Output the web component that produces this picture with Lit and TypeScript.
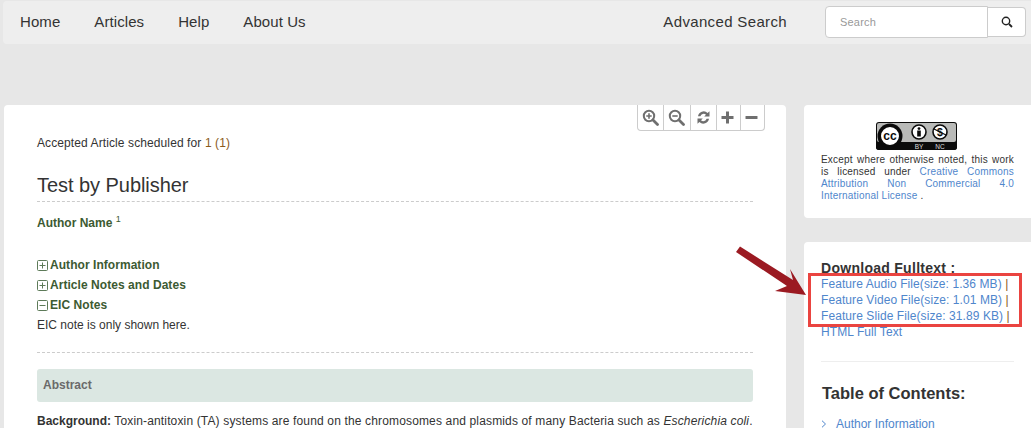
import { LitElement, html, css, svg } from "lit";
import { customElement } from "lit/decorators.js";

const zoomIcon = (plus: boolean) => svg`<svg width="17" height="17" viewBox="0 0 17 17" fill="none" stroke="#6f6f6f"><circle cx="7" cy="7" r="5.2" stroke-width="2"/><path d="M11 11l4.5 4.5" stroke-width="2.8" stroke-linecap="round"/><path d="M4.3 7h5.4${plus ? "M7 4.3v5.4" : ""}" stroke-width="1.6"/></svg>`;

@customElement("app-root")
export class AppRoot extends LitElement {
  static styles = css`
    :host { display: block; height: 428px; overflow: hidden; position: relative; background: #e7e7e7; font-family: "Liberation Sans", Arial, sans-serif; color: #333; }
    a { color: #4f86cc; text-decoration: none; }
    .nav { margin: 1px 0 0 3px; height: 43px; box-sizing: border-box; background: #eee; border-radius: 4px 0 0 4px; display: flex; align-items: center; padding: 0 5px 2px 17px; font-size: 15px; letter-spacing: 0.08px; color: #333; }
    .nav span { margin-right: 34px; }
    .nav .adv { margin: 0 38px 0 auto; font-size: 15px; letter-spacing: 0.35px; }
    .search { width: 163px; height: 32px; box-sizing: border-box; background: #fff; border: 1px solid #ccc; border-radius: 4px 0 0 4px; font-size: 11px; letter-spacing: 0.2px; color: #999; display: flex; align-items: center; padding-left: 14px; }
    .sbtn { width: 38px; height: 30px; box-sizing: border-box; background: #fff; border: 1px solid #ccc; border-left: 0; border-radius: 0 4px 4px 0; display: flex; align-items: center; justify-content: center; }
    .row { display: flex; align-items: flex-start; gap: 18px; margin: 61px 0 0 4px; }
    .main { position: relative; width: 782px; height: 340px; box-sizing: border-box; padding: 0 33px; background: #fff; border-radius: 4px 4px 0 0; font-size: 12px; }
    .tools { position: absolute; left: 633px; top: 0; display: flex; height: 26px; box-sizing: border-box; border: 1px solid #ccc; border-top: 0; border-radius: 0 0 4px 4px; }
    .tools div { box-sizing: border-box; display: flex; align-items: center; justify-content: center; border-right: 1px solid #ccc; height: 100%; }
    .tools div:last-child { border-right: 0; }
    .t26 { width: 26px; }
    .t27 { width: 27px; padding-right: 2px; }
    .t24 { width: 24px; padding-right: 3px; }
    .t23 { width: 23px; padding-right: 2px; }
    .sched { padding-top: 31px; line-height: 14px; letter-spacing: 0.1px; }
    .sched b { font-weight: 400; color: #8a5a1b; }
    h1 { margin: 0; padding: 21px 0 2px; height: 28px; line-height: 28px; font-size: 20px; font-weight: 400; letter-spacing: -0.05px; border-bottom: 1px dashed #ccc; box-sizing: content-box; }
    .author { margin-top: 13px; line-height: 16px; font-weight: 700; color: #3c5a32; }
    .author sup { font-size: 9px; font-weight: 400; line-height: 0; color: #3c5a32; }
    .secs { margin-top: 24px; padding-bottom: 17px; border-bottom: 1px dashed #ccc; }
    .sec { height: 20px; display: flex; align-items: center; gap: 2px; font-weight: 700; color: #3c5a32; letter-spacing: 0.05px; }
    .note { height: 20px; line-height: 20px; }
    .abs { margin-top: 16px; height: 33px; line-height: 33px; padding-left: 6px; background: #dbe7e2; border-radius: 3px; font-weight: 700; color: #6a6a6a; }
    .bg { margin-top: 11px; line-height: 17px; letter-spacing: 0.15px; white-space: nowrap; }
    .bg b { letter-spacing: 0; }
    .side { width: 227px; display: flex; flex-direction: column; gap: 24px; }
    .card { background: #fff; border-radius: 4px 0 0 4px; padding: 0 17px; box-sizing: border-box; }
    .cc { height: 113px; padding-top: 17px; }
    .badge { display: block; margin: 0 0 4px 55px; }
    .cc p { width: 193px; margin: 0; font-size: 10px; line-height: 12px; letter-spacing: 0.2px; text-align: justify; }
    .dl { height: 190px; padding-top: 18px; }
    .dl h3 { margin: 0; font-size: 14px; line-height: 16px; letter-spacing: 0.28px; font-weight: 700; }
    .dl .lnk { font-size: 12px; line-height: 16px; white-space: nowrap; letter-spacing: 0.08px; }
    .dl .lnk i { font-style: normal; color: #8a5a1b; }
    .dl hr { width: 193px; margin: 21px 0 0; border: 0; border-top: 1px solid #eee; }
    .dl h2 { margin: 21px 0 0 1px; font-size: 16.5px; line-height: 20px; font-weight: 700; }
    .toc { margin-top: 13px; display: flex; align-items: center; gap: 9px; font-size: 12px; line-height: 16px; }
    .over { position: absolute; left: 0; top: 0; pointer-events: none; }
    .redbox { position: absolute; left: 808px; top: 273px; width: 214px; height: 54px; box-sizing: border-box; border: 3px solid #ea4440; }
  `;

  render() {
    const plus = (p: boolean) => html`<svg width="11" height="11" viewBox="0 0 11 11" fill="none" stroke="#5d7a58"><rect x=".5" y=".5" width="10" height="10" rx="1"/><path d="M2.5 5.5h6${p ? "M5.5 2.5v6" : ""}"/></svg>`;
    return html`
      <div class="nav">
        <span>Home</span><span>Articles</span><span>Help</span><span>About Us</span>
        <span class="adv">Advanced Search</span>
        <div class="search">Search</div>
        <div class="sbtn"><svg width="12" height="12" viewBox="0 0 12 12" fill="none" stroke="#222"><circle cx="5" cy="5" r="3.7" stroke-width="1.4"/><path d="M8 8l3 3" stroke-width="1.8"/></svg></div>
      </div>
      <div class="row">
        <div class="main">
          <div class="tools">
            <div class="t26">${zoomIcon(true)}</div>
            <div class="t27">${zoomIcon(false)}</div>
            <div class="t26"><svg width="15" height="15" viewBox="0 0 15 15" fill="#6f6f6f"><path d="M2 6.3A5.7 5.7 0 0 1 11.6 3L13.5 1.2V6.6H8.2L10 4.8A3.4 3.4 0 0 0 4.4 6.3z"/><path d="M13 8.7A5.7 5.7 0 0 1 3.4 12L1.5 13.8V8.4H6.8L5 10.2A3.4 3.4 0 0 0 10.6 8.7z"/></svg></div>
            <div class="t24"><svg width="13" height="13" viewBox="0 0 13 13" fill="#6f6f6f"><path d="M5 .5h3v4.5h4.5v3H8v4.5H5V8H.5V5H5z"/></svg></div>
            <div class="t23"><svg width="13" height="13" viewBox="0 0 13 13" fill="#6f6f6f"><rect x=".5" y="5" width="12" height="3" rx=".5"/></svg></div>
          </div>
          <div class="sched">Accepted Article scheduled for <b>1 (1)</b></div>
          <h1>Test by Publisher</h1>
          <div class="author">Author Name <sup>1</sup></div>
          <div class="secs">
            <div class="sec">${plus(true)}<span>Author Information</span></div>
            <div class="sec">${plus(true)}<span>Article Notes and Dates</span></div>
            <div class="sec">${plus(false)}<span>EIC Notes</span></div>
            <div class="note">EIC note is only shown here.</div>
          </div>
          <div class="abs">Abstract</div>
          <div class="bg"><b>Background:</b> Toxin-antitoxin (TA) systems are found on the chromosomes and plasmids of many Bacteria such as <em>Escherichia coli</em>.</div>
        </div>
        <div class="side">
          <div class="card cc">
            <svg class="badge" width="81" height="28" viewBox="0 0 81 28">
              <rect width="81" height="28" rx="3" fill="#0b0b0b"/>
              <rect x="1" y="1" width="79" height="19" rx="2" fill="#b9bab8"/>
              <path d="M0 20h81v5a3 3 0 0 1-3 3H3a3 3 0 0 1-3-3z" fill="#0b0b0b"/>
              <circle cx="14" cy="14" r="12.5" fill="#0b0b0b"/>
              <circle cx="14" cy="14" r="10" fill="#fff" stroke="#0b0b0b" stroke-width="2"/>
              <text x="14" y="18" text-anchor="middle" font-family="Liberation Sans" font-weight="700" font-size="12" fill="#0b0b0b">cc</text>
              <circle cx="43" cy="10" r="7" fill="#fff" stroke="#0b0b0b" stroke-width="1.6"/>
              <circle cx="43" cy="6.6" r="1.4" fill="#0b0b0b"/>
              <rect x="41.2" y="8.5" width="3.6" height="6" fill="#0b0b0b"/>
              <circle cx="64" cy="10" r="7" fill="#fff" stroke="#0b0b0b" stroke-width="1.6"/>
              <text x="64" y="14" text-anchor="middle" font-family="Liberation Sans" font-weight="700" font-size="10.5" fill="#0b0b0b">$</text>
              <path d="M58 7l12 6" stroke="#0b0b0b" stroke-width="1.2"/>
              <text x="43" y="26.5" text-anchor="middle" font-family="Liberation Sans" font-size="6.5" fill="#ddd">BY</text>
              <text x="64" y="26.5" text-anchor="middle" font-family="Liberation Sans" font-size="6.5" fill="#ddd">NC</text>
            </svg>
            <p>Except where otherwise noted, this work is licensed under <a>Creative Commons Attribution Non Commercial 4.0 International License</a> .</p>
          </div>
          <div class="card dl">
            <h3>Download Fulltext :</h3>
            <div class="lnk"><a>Feature Audio File(size: 1.36 MB)</a><i> |</i></div>
            <div class="lnk"><a>Feature Video File(size: 1.01 MB)</a><i> |</i></div>
            <div class="lnk"><a>Feature Slide File(size: 31.89 KB)</a><i> |</i></div>
            <div class="lnk"><a>HTML Full Text</a></div>
            <hr />
            <h2>Table of Contents:</h2>
            <div class="toc"><svg width="6" height="8" viewBox="0 0 6 8" fill="none" stroke="#4f86cc"><path d="M1 .7L4.5 4 1 7.3"/></svg><a>Author Information</a></div>
          </div>
        </div>
      </div>
      <svg class="over" width="1031" height="428"><polygon points="740,246.5 793,280 790,269 806,295 775,291 787,286 736,252" fill="#9b1a22"/></svg>
      <div class="redbox"></div>
    `;
  }
}
